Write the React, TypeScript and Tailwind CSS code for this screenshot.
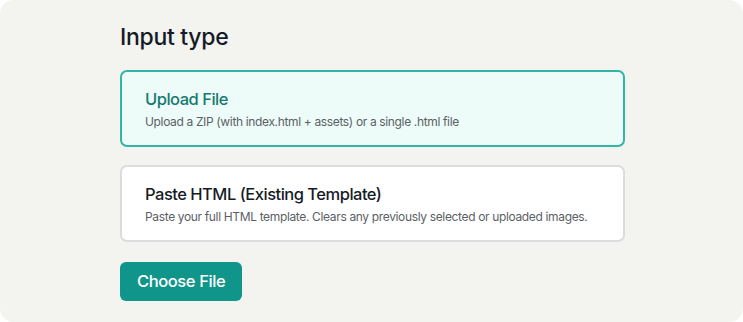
import React, { useState } from 'react';

type Option = {
    id: 'upload' | 'paste';
    title: string;
    description: string;
};

const options: Option[] = [
    { id: 'upload', title: 'Upload File', description: 'Upload a ZIP (with index.html + assets) or a single .html file' },
    { id: 'paste', title: 'Paste HTML (Existing Template)', description: 'Paste your full HTML template. Clears any previously selected or uploaded images.' },
];

export default function App() {
    const [selected, setSelected] = useState<Option['id']>('upload');

    return (
        <div className="w-[743px] h-[322px] bg-white" style={{ fontFamily: 'Inter, "Noto Sans", sans-serif' }}>
            <div className="h-full rounded-[14px] bg-[#f3f3ef] pt-[22px] pl-[120px]">
                <div className="w-[505px]">
                    <h2 className="text-[23px] leading-[30px] font-medium tracking-[-0.3px] text-[#141a26]">Input type</h2>

                    <div className="mt-[18px] flex flex-col gap-[18px]">
                        {options.map(opt => {
                            const active = opt.id === selected;
                            return (
                                <button
                                    key={opt.id}
                                    onClick={() => setSelected(opt.id)}
                                    className={
                                        active
                                            ? 'h-[77px] w-full rounded-[7px] border-2 border-[#33b5a6] bg-[#edfcf8] px-[23px] text-left flex flex-col justify-center'
                                            : 'h-[77px] w-full rounded-[7px] border-2 border-[#dcdce0] bg-white px-[23px] text-left flex flex-col justify-center'
                                    }
                                >
                                    <span className={active ? 'text-[16.5px] leading-6 font-medium tracking-[-0.5px] text-[#177a70]' : 'text-[16.5px] leading-6 font-medium tracking-[-0.5px] text-[#161b26]'}>
                                        {opt.title}
                                    </span>
                                    <span className="mt-[3px] whitespace-nowrap text-[12px] leading-4 tracking-[-0.35px] text-[#5b5f66]">{opt.description}</span>
                                </button>
                            );
                        })}
                    </div>

                    <button className="mt-5 h-[39px] rounded-[6px] bg-[#10958a] px-[17px] text-[16.5px] font-medium tracking-[-0.4px] text-white">
                        Choose File
                    </button>
                </div>
            </div>
        </div>
    );
}
